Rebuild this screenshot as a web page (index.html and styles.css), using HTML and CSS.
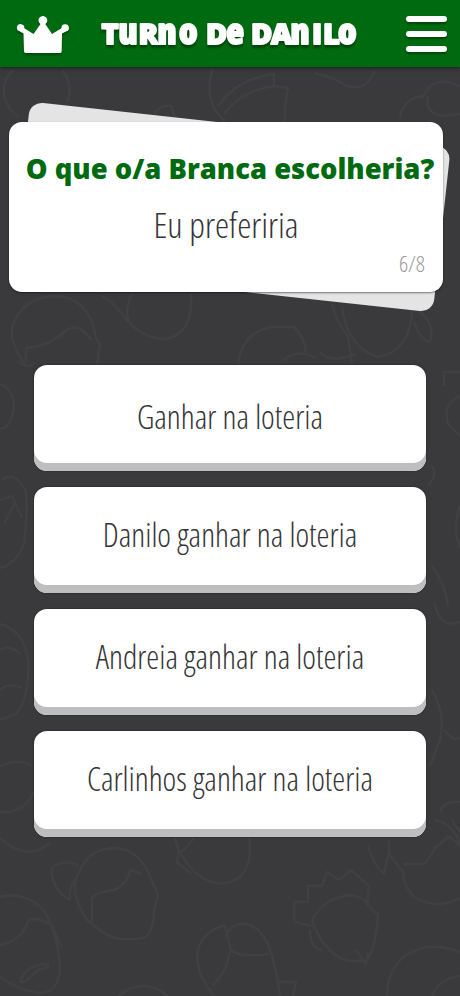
FILE: index.html
```html
<!DOCTYPE html>
<html lang="pt">
	<head>
		<meta charset="utf-8">
		<title>Turno de Danilo</title>
		<link rel="stylesheet" href="styles.css">
	</head>
	<body>
		<svg class="doodles" viewBox="0 0 460 996" aria-hidden="true">
			<!-- top -->
			<path d="M4 96Q2 78 14 70M62 70q12 14 5 32M4 96q4 14 14 20"/>
			<path d="M213 68q-8 22 2 42l10 12M218 106q20-28 56-32v12q-32 4-50 28M274 86l14 2q-4 20-3 34M315 73q18 4 30 12 16 6 24-4l6-10M153 116q6-12 18-10l4 12"/>
			<path d="M400 118q2-20 24-22 6-16 24-14l12 4M428 96q-4 16 14 20l18-2"/>
			<!-- between the question and the answers -->
			<path d="M26 366q-20-28-12-44 12-26 42-26 34 2 40 42l4 6-3 22M26 362v-14q24-2 38-16 10-8 18-2l10 10M102 296q14 8 26 26M132 294q-10 20 0 32 18 14 34 13 28-6 25-45"/>
			<path d="M238 364q4-30 32-37h24q10 8 12 26M284 360q14-12 32-2M332 304q4 18 16 32l4 28M342 308q6 40 36 49 34-6 34-50M418 310q18 14 12 32-10-2-16-20"/>
			<path d="M18 362q12 8 16 0M98 350v14M320 352q10 12 36 2"/>
			<!-- sides -->
			<path d="M0 384q14 6 14 24-4 22-14 20M2 480q14-10 24 12 2 26-2 52-8 20-24 24M0 500l12-4 10 22M14 504l-10 20"/>
			<path d="M460 372h-16v14M460 396q-18 8-12 28l12 12M432 466q6 8-4 20M460 506q-8 22 0 42M432 566q14 20 16 40"/>
			<path d="M0 624q24 6 28 36 2 36-12 54L0 720M0 690q8-8 22-2M0 766q20-8 32 0M0 812q24 2 34-20M0 650q10-6 20 4"/>
			<path d="M434 602q6 28 26 20M432 690q14 24 8 50l-10 26M444 730q10 12 16 8M440 812q4-12 20-10M434 820q18 2 26 24"/>
			<!-- bottom -->
			<path d="M0 838q14 14 30 14 14-2 20-10"/>
			<path d="M80 870q10-22 36-22 22 2 32 24l10 22-4 18q0 16-8 25-14 4-32 1-10-4-22-14l-5-4q-20-30-7-50zM92 922v-24q4-6 22-8 14-6 16-20l12 4M79 866q-16-8-27 2-2 20 18 32M76 878q-8 10-6 22"/>
			<path d="M175 838q8 28 28 40 20 12 38-2 12-14 8-38M175 842q6 8 2 20l14 12M182 852l12-14"/>
			<path d="M0 897q26-6 44 14 14 22 16 58-2 24-20 24-20-2-40-16M0 945q22-4 28-24 8-6 26 6M20 982q6-18 28-18 2 4-10 6-8 8-14 12zM54 930l8 18"/>
			<path d="M225 925q-28 8-28 34 2 20 18 38M225 937q6-14 18-13 14 0 24 18 8 18 13 54M225 926l6 24q8 8 38 4M230 951q-4 24-18 34M278 982h18l-3 14M118 996q26-20 50 0"/>
			<path d="M312 920q12-22 38-25 14 2 18 10l10 10q-2 30-10 44-14 4-26 0-20-10-30-39zM312 926l-18-4v-20h14v-16h14l5-14 12 8 12-10 18 16-2 20M310 930q0 18 12 20M356 950l10 14 2-12"/>
			<path d="M368 846q6 20 16 28l5-22V840M389 854l14 18q0 14 12 26 22 12 45 0M403 864h20q6-4 12-16l14-12 11 10M452 820l8 12"/>
			<path d="M387 996q0-26 18-40 24-16 55-4M432 996q8-18 28-20"/>
		</svg>

		<header class="topbar">
			<svg class="crown" viewBox="0 0 54 40">
				<path d="M8 36.500 7.500 18.500 3.500 16.300A3.700 3.700 0 1 1 8.300 13.200L17.500 19 24.500 9A4.400 4.400 0 1 1 29.300 9L36 19 45.500 13.200A3.700 3.700 0 1 1 49.900 16.500L46 18.500 45.700 36.500Q45.500 38 44 38H10Q8.200 38 8 36.500z"/>
			</svg>
			<svg class="title" viewBox="0 0 260 40">
				<text y="29.500"><tspan class="cap" x="1.500">T</tspan><tspan x="18.500">u</tspan><tspan class="cap" x="38.500">R</tspan><tspan x="57.500">n</tspan><tspan x="79">o</tspan> <tspan class="cap" x="106">D</tspan><tspan x="126.500">e</tspan> <tspan class="cap" x="151">D</tspan><tspan class="cap" x="171">A</tspan><tspan x="190.500">n</tspan><tspan class="cap" x="212">I</tspan><tspan class="cap" x="223">L</tspan><tspan x="238">o</tspan></text>
			</svg>
			<div class="menu"><i></i><i></i><i></i></div>
		</header>

		<main>
			<section class="question">
				<h1>O que o/a Branca escolheria?</h1>
				<p>Eu preferiria</p>
				<span class="count">6/8</span>
			</section>

			<div class="answers">
				<button>Ganhar na loteria</button>
				<button>Danilo ganhar na loteria</button>
				<button>Andreia ganhar na loteria</button>
				<button>Carlinhos ganhar na loteria</button>
			</div>
		</main>
	</body>
</html>
```

FILE: styles.css
```css
* {
	box-sizing: border-box;
}
html, body {
	margin: 0;
}
body {
	min-height: 996px;
	background-color: #3a3a3c;
	color: #353537;
	font-family: "Open Sans", sans-serif;
	font-weight: 300;
	font-stretch: 75%;
}

.doodles {
	position: absolute;
	top: 0;
	left: 0;
	width: 460px;
	height: 996px;
	z-index: -2;
	fill: none;
	stroke: #404043;
	stroke-width: 2.5;
	stroke-linejoin: round;
}

.topbar {
	display: flex;
	align-items: center;
	justify-content: space-between;
	height: 67px;
	padding: 0 13px 0 16px;
	background-color: #006a10;
	box-shadow: 0 1px 4px rgba(0, 0, 0, .5);
}
.crown {
	width: 54px;
	height: 40px;
	margin-top: 2px;
	fill: #fff;
	filter: drop-shadow(0 2px 1px rgba(0, 0, 0, .35));
}
.title {
	width: 260px;
	height: 40px;
	margin: 0 auto 0 30px;
	overflow: visible;
	fill: #fff;
	stroke: #fff;
	stroke-width: 1.9;
	stroke-linejoin: round;
	font-size: 36px;
	font-weight: 800;
	font-stretch: 77%;
	filter: drop-shadow(0 3px 1px rgba(0, 0, 0, .35));
}
.title .cap {
	font-size: 29px;
	font-stretch: 88%;
}
.menu {
	display: grid;
	gap: 9px;
}
.menu i {
	width: 41px;
	height: 6px;
	border-radius: 3px;
	background-color: #fff;
	box-shadow: 0 2px 2px rgba(0, 0, 0, .35);
}

.question {
	position: relative;
	width: 434px;
	height: 170px;
	margin: 55px 0 0 9px;
	padding-top: 28px;
	border-radius: 13px;
	background-color: #fff;
	box-shadow: 0 1px 2px rgba(0, 0, 0, .5);
	text-align: center;
}
.question::before {
	content: "";
	position: absolute;
	z-index: -1;
	top: 2px;
	left: 11px;
	width: 423px;
	height: 166px;
	border-radius: 13px;
	background-color: #e4e4e4;
	transform: rotate(6.2deg);
}
.question h1 {
	margin: 0 0 0 8px;
	color: #006a10;
	font-size: 27.4px;
	font-weight: 800;
	font-stretch: 100%;
	line-height: 38px;
	white-space: nowrap;
}
.question p {
	margin: 10px 0 0;
	font-size: 35.800px;
	line-height: 52px;
}
.count {
	position: absolute;
	right: 18px;
	bottom: 12px;
	color: #999;
	font-size: 22.500px;
	line-height: 32px;
}

.answers {
	display: grid;
	gap: 16px;
	margin: 73px 34px 0;
}
.answers button {
	height: 106px;
	padding: 0 0 11px;
	border: 0;
	border-radius: 13px;
	background-color: #fff;
	box-shadow: inset 0 -8px #bebebe, 0 0 2px rgba(0, 0, 0, .5);
	color: inherit;
	font: inherit;
	font-size: 32.700px;
}
.answers button:first-child {
	padding-bottom: 3px;
}
```
